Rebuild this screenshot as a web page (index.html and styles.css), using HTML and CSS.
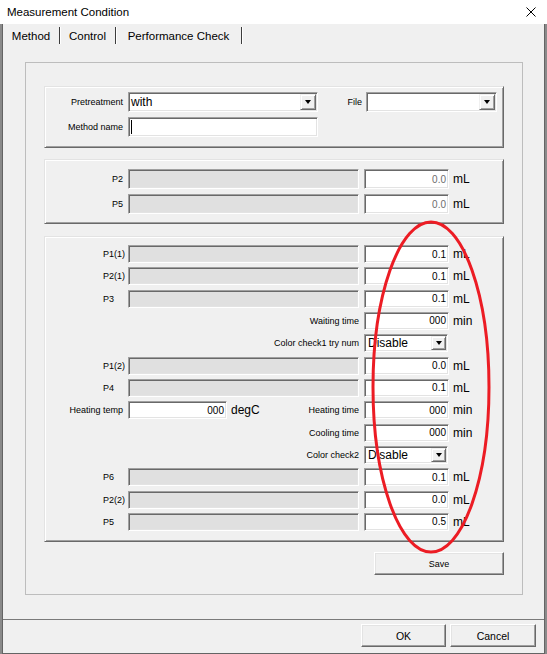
FILE: index.html
```html
<!DOCTYPE html>
<html>
<head>
<meta charset="utf-8">
<link rel="stylesheet" href="styles.css">
</head>
<body>
<div class="window">
  <div class="titlebar">
    <span class="title">Measurement Condition</span>
    <svg class="close" viewBox="0 0 10 10"><path d="M0.5 0.5L9.5 9.5M9.5 0.5L0.5 9.5" stroke="#000" stroke-width="1" fill="none"/></svg>
  </div>
  <div class="client">
    <div class="tabs">
      <div class="tab t1">Method</div>
      <div class="tab t2">Control</div>
      <div class="tab t3">Performance Check</div>
    </div>
    <div class="page">
      <div class="frame">
        <div class="group g1">
          <div class="row r20">
            <span class="lbl lr">Pretreatment</span>
            <div class="combo c-pre sunk"><span class="ctext">with</span><span class="dd"><i></i></span></div>
            <span class="lbl file">File</span>
            <div class="combo c-file sunk"><span class="ctext"></span><span class="dd"><i></i></span></div>
          </div>
          <div class="row r20">
            <span class="lbl lr">Method name</span>
            <div class="edit e-name sunk"><span class="caret"></span></div>
          </div>
        </div>

        <div class="group g2">
          <div class="row r20">
            <span class="lbl lr">P2</span>
            <div class="gfield sunk"></div>
            <div class="val sunk dis">0.0</div>
            <span class="unit">mL</span>
          </div>
          <div class="row r20">
            <span class="lbl lr">P5</span>
            <div class="gfield sunk"></div>
            <div class="val sunk dis">0.0</div>
            <span class="unit">mL</span>
          </div>
        </div>

        <div class="group g3">
          <div class="row r18">
            <span class="lbl ll">P1(1)</span>
            <div class="gfield sunk"></div>
            <div class="val sunk">0.1</div>
            <span class="unit">mL</span>
          </div>
          <div class="row r18">
            <span class="lbl ll">P2(1)</span>
            <div class="gfield sunk"></div>
            <div class="val sunk">0.1</div>
            <span class="unit">mL</span>
          </div>
          <div class="row r18">
            <span class="lbl ll">P3</span>
            <div class="gfield sunk"></div>
            <div class="val sunk">0.1</div>
            <span class="unit">mL</span>
          </div>
          <div class="row r18">
            <span class="lbl lr"></span>
            <span class="lbl mid">Waiting time</span>
            <div class="val sunk">000</div>
            <span class="unit">min</span>
          </div>
          <div class="row r18">
            <span class="lbl lr"></span>
            <span class="lbl mid">Color check1 try num</span>
            <div class="combo c-sm sunk"><span class="ctext">Disable</span><span class="dd"><i></i></span></div>
          </div>
          <div class="row r18">
            <span class="lbl ll">P1(2)</span>
            <div class="gfield sunk"></div>
            <div class="val sunk">0.0</div>
            <span class="unit">mL</span>
          </div>
          <div class="row r18">
            <span class="lbl ll">P4</span>
            <div class="gfield sunk"></div>
            <div class="val sunk">0.1</div>
            <span class="unit">mL</span>
          </div>
          <div class="row r18">
            <span class="lbl lr">Heating temp</span>
            <div class="midbox">
              <div class="val ht sunk">000</div>
              <span class="unit">degC</span>
              <span class="lbl push">Heating time</span>
            </div>
            <div class="val sunk">000</div>
            <span class="unit">min</span>
          </div>
          <div class="row r18">
            <span class="lbl lr"></span>
            <span class="lbl mid">Cooling time</span>
            <div class="val sunk">000</div>
            <span class="unit">min</span>
          </div>
          <div class="row r18">
            <span class="lbl lr"></span>
            <span class="lbl mid">Color check2</span>
            <div class="combo c-sm sunk"><span class="ctext">Disable</span><span class="dd"><i></i></span></div>
          </div>
          <div class="row r18">
            <span class="lbl ll">P6</span>
            <div class="gfield sunk"></div>
            <div class="val sunk">0.1</div>
            <span class="unit">mL</span>
          </div>
          <div class="row r18">
            <span class="lbl ll">P2(2)</span>
            <div class="gfield sunk"></div>
            <div class="val sunk">0.0</div>
            <span class="unit">mL</span>
          </div>
          <div class="row r18">
            <span class="lbl ll">P5</span>
            <div class="gfield sunk"></div>
            <div class="val sunk">0.5</div>
            <span class="unit">mL</span>
          </div>
        </div>

        <div class="save-row">
          <button class="btn save">Save</button>
        </div>
      </div>
    </div>
    <div class="footer">
      <button class="btn ok">OK</button>
      <button class="btn cancel">Cancel</button>
    </div>
  </div>
  <svg class="annot" width="547" height="654" viewBox="0 0 547 654"><ellipse cx="431" cy="387" rx="58" ry="165" fill="none" stroke="#ec1c24" stroke-width="3"/></svg>
</div>
</body>
</html>
```

FILE: styles.css
```css
* { box-sizing: border-box; }
html, body { margin: 0; padding: 0; }
body {
  background: #8a8a8a;
  font-family: "Liberation Sans", Arial, sans-serif;
  color: #000;
}
.window {
  position: relative;
  width: 547px;
  height: 654px;
  display: flex;
  flex-direction: column;
  overflow: hidden;
}
.titlebar {
  height: 24px;
  flex: none;
  background: #fff;
  display: flex;
  align-items: center;
  justify-content: space-between;
  padding: 0 11px 0 7px;
}
.title { font-size: 11.5px; }
.close { width: 10px; height: 10px; display: block; }

.client {
  flex: 1;
  margin: 0 2px;
  background: #f0f0f0;
  border-left: 1px solid #646464;
  border-right: 1px solid #646464;
  border-bottom: 1px solid #646464;
  display: flex;
  flex-direction: column;
}
.tabs { height: 20px; flex: none; display: flex; }
.tab {
  margin-top: 3px;
  height: 17px;
  border-right: 1px solid #3c3c3c;
  box-shadow: 1px 0 0 #fff;
  font-size: 11.5px;
  display: flex;
  align-items: center;
  justify-content: center;
  padding-top: 1px;
}
.t1 { width: 57px; }
.t2 { width: 56px; }
.t3 { width: 126px; }

.page {
  height: 576px;
  flex: none;
  border-bottom: 1px solid #7a7a7a;
  padding: 18px 21px 0 22px;
}
.frame {
  width: 498px;
  border: 1px solid #bdbdbd;
  padding: 23px 18px 19px 18px;
}

.group {
  border: 1px solid;
  border-color: #e3e3e3 #696969 #696969 #e3e3e3;
  box-shadow: inset 1px 1px 0 #fff, inset -1px -1px 0 #a0a0a0;
  display: flex;
  flex-direction: column;
}
.g1 { height: 62px; padding-top: 5px; row-gap: 5px; margin-bottom: 11px; }
.g2 { height: 65px; padding-top: 9px; row-gap: 5px; margin-bottom: 12px; }
.g3 { height: 306px; padding-top: 8px; row-gap: 4.333px; }

.row { display: flex; align-items: center; flex: none; }
.r20 { height: 20px; }
.r18 { height: 18px; }

.lbl { font-size: 9px; white-space: nowrap; }
.lr { width: 78px; margin-right: 5px; text-align: right; flex: none; }
.ll { width: 78px; margin-right: 5px; padding-left: 58px; text-align: left; flex: none; }
.file { width: 44px; margin-right: 4px; text-align: right; flex: none; }
.mid { width: 231px; margin-right: 5px; text-align: right; flex: none; }

.sunk {
  background: #fff;
  border: 1px solid;
  border-color: #a0a0a0 #fff #fff #a0a0a0;
  box-shadow: inset 1px 1px 0 #696969, inset -1px -1px 0 #e3e3e3;
  height: 100%;
  flex: none;
}
.gfield { width: 231px; margin-right: 5px; background: #e0e0e0; }
.val {
  width: 85px;
  font-size: 10px;
  text-align: right;
  padding-right: 2px;
  display: flex;
  align-items: center;
  justify-content: flex-end;
}
.dis { color: #6d6d6d; }
.unit { font-size: 12px; margin-left: 4px; white-space: nowrap; }

.midbox {
  width: 231px;
  margin-right: 5px;
  height: 100%;
  display: flex;
  align-items: center;
  flex: none;
}
.ht { width: 99px; }
.push { margin-left: auto; }

.combo {
  display: flex;
  align-items: stretch;
  padding: 1px;
}
.c-pre { width: 190px; }
.c-file { width: 131px; }
.c-sm { width: 84px; }
.ctext {
  flex: 1;
  font-size: 12px;
  display: flex;
  align-items: center;
  padding-left: 1px;
  overflow: hidden;
}
.c-sm .ctext { padding-left: 2px; }
.dd {
  width: 16px;
  flex: none;
  background: #f0f0f0;
  border: 1px solid;
  border-color: #f0f0f0 #696969 #696969 #f0f0f0;
  box-shadow: inset 1px 1px 0 #fff, inset -1px -1px 0 #a0a0a0;
  display: flex;
  align-items: center;
  justify-content: center;
}
.c-sm .dd { width: 15px; }
.dd i {
  display: block;
  width: 0;
  height: 0;
  border-left: 3.5px solid transparent;
  border-right: 3.5px solid transparent;
  border-top: 4px solid #000;
}

.edit { display: flex; align-items: center; padding-left: 2px; }
.e-name { width: 190px; }
.caret { display: block; width: 1px; height: 14px; background: #000; }

.btn {
  font-family: "Liberation Sans", Arial, sans-serif;
  color: #000;
  background: #f0f0f0;
  border: 1px solid;
  border-color: #fff #696969 #696969 #fff;
  box-shadow: inset -1px -1px 0 #a0a0a0, inset 1px 1px 0 #e3e3e3;
  height: 23px;
  padding: 0;
  margin: 0;
}
.save-row { display: flex; justify-content: flex-end; margin-top: 10px; }
.save { width: 130px; font-size: 9px; }

.footer {
  flex: 1;
  display: flex;
  justify-content: flex-end;
  align-items: flex-start;
  padding: 4px 8px 0 0;
  column-gap: 4px;
}
.ok { width: 85px; font-size: 10.5px; }
.cancel { width: 86px; font-size: 10.5px; }

.annot { position: absolute; left: 0; top: 0; pointer-events: none; }
```
